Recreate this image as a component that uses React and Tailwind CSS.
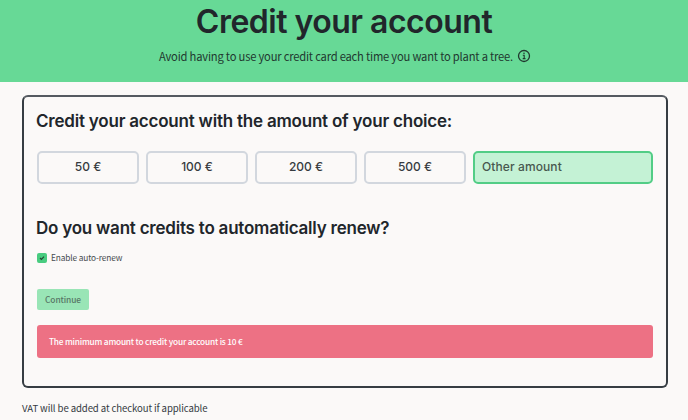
import React from "react";

const heading = "font-['Inter',sans-serif] whitespace-nowrap text-[#21262b]";
const body = "font-['Noto_Sans_CJK_SC',sans-serif] whitespace-nowrap";

const amounts = ["50 €", "100 €", "200 €", "500 €"];

function InfoIcon() {
  return (
    <svg viewBox="0 0 14 14" className="h-[14px] w-[14px]" fill="none" stroke="#21382f">
      <circle cx="7" cy="7" r="5.5" strokeWidth="1.3" />
      <path d="M5.8 6.3H7.2V9.6M5.7 9.6H8.5" strokeWidth="1.1" />
      <circle cx="7" cy="4.3" r="0.8" fill="#21382f" stroke="none" />
    </svg>
  );
}

export default function App() {
  return (
    <div className="h-[420px] w-[688px] overflow-hidden bg-[#fbf9f8]">
      <header className="flex h-[82px] flex-col items-center bg-[#67d996]">
        <h1 className={`${heading} h-[42px] pt-px text-[32px] leading-[42px] font-semibold tracking-[-0.5px]`}>
          Credit your account
        </h1>
        <div className="mt-1 flex h-5 items-center gap-[4px] pl-[2px]">
          <p className={`${body} text-[11.2px] leading-5 tracking-[-0.2px] text-[#21382f]`}>
            Avoid having to use your credit card each time you want to plant a tree.
          </p>
          <InfoIcon />
        </div>
      </header>

      <main className="mt-[13px] ml-[22px] h-[293px] w-[646px] rounded-[6px] border-2 border-x-[#363d43] border-t-[#555a61] border-b-[#363d43] pt-3 pr-[13px] pl-[13px]">
        <h2 className={`${heading} -ml-px h-6 text-[17px] leading-6 font-semibold tracking-[-0.21px]`}>
          Credit your account with the amount of your choice:
        </h2>
        <div className="mt-[18px] flex h-[33px] gap-[7px]">
          {amounts.map((a) => (
            <button
              key={a}
              className={`${heading} w-[102px] rounded-[5px] border-2 border-[#d2d7de] pb-px text-[12px] font-medium`}
            >
              <span className="text-[#363b40]">{a}</span>
            </button>
          ))}
          <div
            className={`${heading} flex flex-1 items-center rounded-[5px] border-2 border-[#52cd86] bg-[#c4f2d5] pb-px pl-[7px] text-[12px] font-medium tracking-[0.1px]`}
          >
            <span className="text-[#48584f]">Other amount</span>
          </div>
        </div>

        <h2 className={`${heading} -ml-px mt-8 h-6 text-[17px] leading-6 font-semibold tracking-[-0.22px]`}>
          Do you want credits to automatically renew?
        </h2>
        <label className="mt-3 flex h-[11px] items-center gap-[4px]">
          <span className="flex h-[10px] w-[10px] items-center justify-center rounded-[2px] bg-[#48cc80]">
            <svg viewBox="0 0 10 10" className="h-[10px] w-[10px]" fill="none" stroke="#244634" strokeWidth="1.2">
              <path d="M3 5L4.4 6.3L7 3.6" />
            </svg>
          </span>
          <span className={`${body} text-[8.3px] leading-[11px] tracking-[-0.12px] text-[#464b4f]`}>
            Enable auto-renew
          </span>
        </label>

        <button
          className={`${body} mt-[26px] flex h-[21px] w-[52px] items-center justify-center rounded-[2px] bg-[#99e5b6] text-[8.4px] font-medium tracking-[-0.1px] text-[#577565]`}
        >
          Continue
        </button>
        <div
          className={`${body} mt-[15px] flex h-[33px] items-center rounded-[3px] bg-[#ed7184] pl-[12px] text-[8.3px] font-medium tracking-[-0.2px] text-white`}
        >
          <span>The minimum amount to credit your account is 10 €</span>
        </div>
      </main>

      <p className={`${body} mt-[12px] ml-[22px] text-[9.6px] leading-4 tracking-[-0.1px] text-[#343a3f]`}>
        <span>VAT will be added at checkout if applicable</span>
      </p>
    </div>
  );
}
